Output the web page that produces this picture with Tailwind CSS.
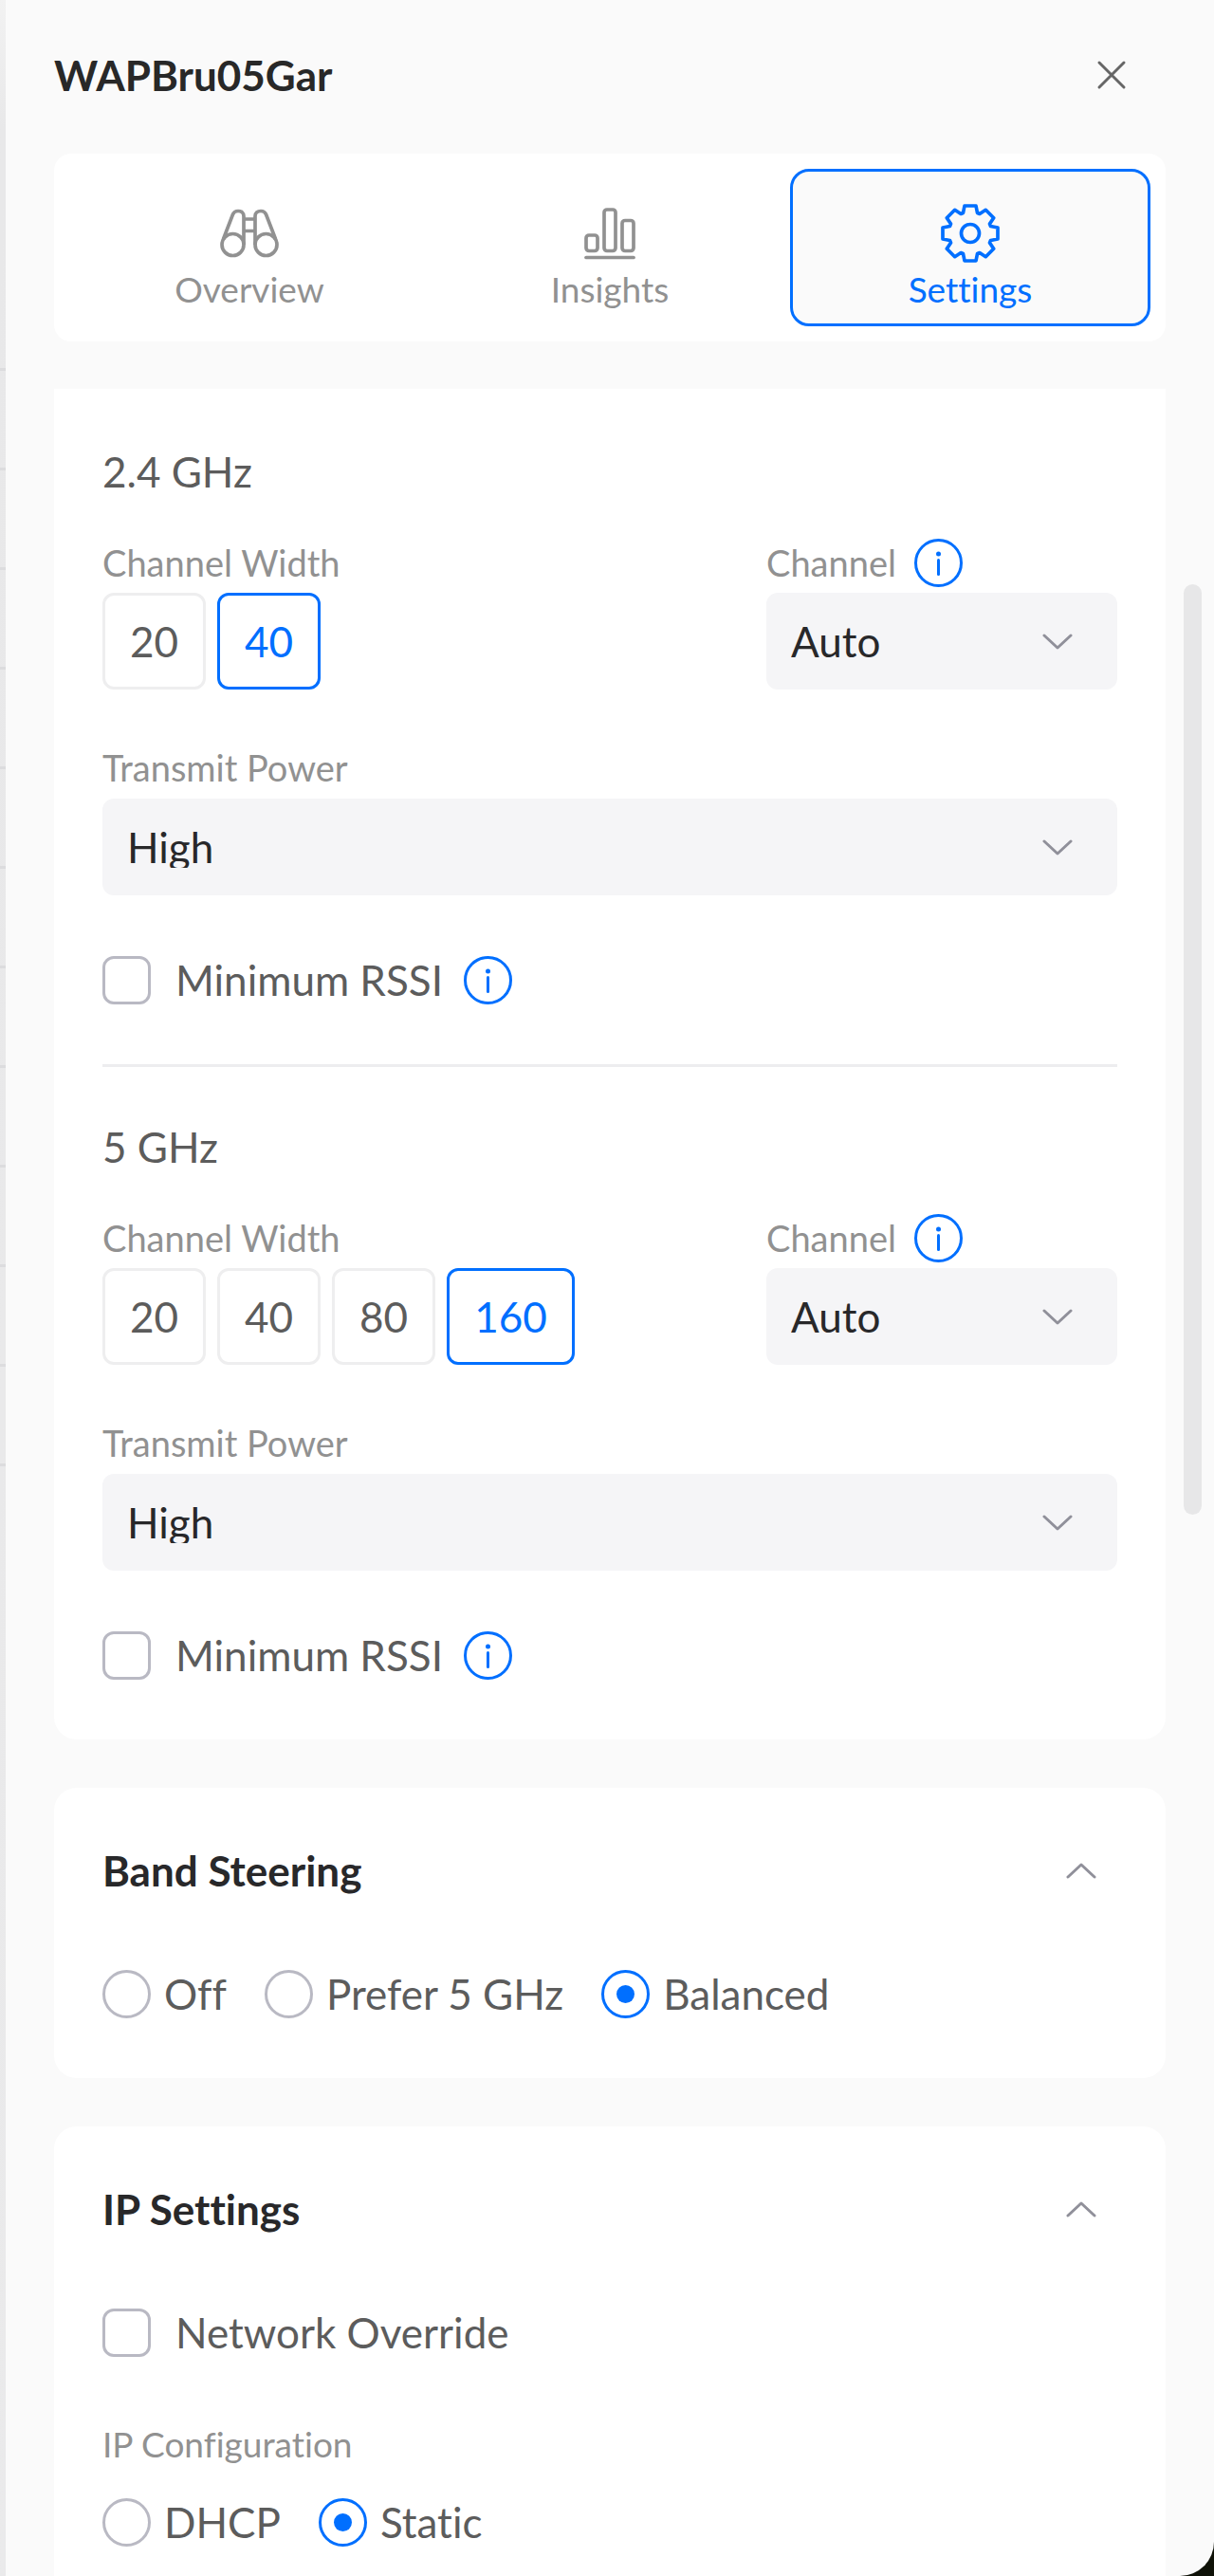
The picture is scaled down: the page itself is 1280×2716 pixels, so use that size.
<!DOCTYPE html>
<html lang="en">
<head>
    <meta charset="UTF-8">
    <meta name="viewport" content="width=device-width, initial-scale=1.0">
    <title>WAPBru05Gar - Settings</title>
    <script src="https://cdn.jsdelivr.net/npm/@tailwindcss/browser@4"></script>
</head>

<body class="bg-[#0f1208] font-['Lato',sans-serif] text-[44px] leading-[51px] text-[#5c5c5c] [font-variant-ligatures:none]">
    <!-- Shared icons -->
    <svg class="hidden" aria-hidden="true">
        <symbol id="icon-info" viewBox="0 0 51 51">
            <circle cx="25.5" cy="25.5" r="24" fill="none" stroke="currentColor" stroke-width="3" />
            <circle cx="25.5" cy="16" r="2.5" fill="currentColor" />
            <path d="M25.5 22.5v15" stroke="currentColor" stroke-width="3" stroke-linecap="round" />
        </symbol>
        <symbol id="icon-chevron" viewBox="0 0 32 18">
            <path d="M2 2l14 13L30 2" fill="none" stroke="currentColor" stroke-width="3" stroke-linecap="round" stroke-linejoin="round" />
        </symbol>
    </svg>

    <div class="flex h-screen overflow-hidden rounded-br-[36px] bg-[#fafafa]">
        <!-- Edge of the device table behind the panel -->
        <div class="flex w-[6px] shrink-0 flex-col bg-linear-to-b from-[#f2f2f2] via-[#e8e8e9] via-5% to-[#eaeaeb] pt-[388px]">
            <div class="h-[105px] border-t-3 border-[#dcdcde]"></div>
            <div class="h-[105px] border-t-3 border-[#dcdcde]"></div>
            <div class="h-[105px] border-t-3 border-[#dcdcde]"></div>
            <div class="h-[105px] border-t-3 border-[#dcdcde]"></div>
            <div class="h-[105px] border-t-3 border-[#dcdcde]"></div>
            <div class="h-[105px] border-t-3 border-[#dcdcde]"></div>
            <div class="h-[105px] border-t-3 border-[#dcdcde]"></div>
            <div class="h-[105px] border-t-3 border-[#dcdcde]"></div>
            <div class="h-[105px] border-t-3 border-[#dcdcde]"></div>
            <div class="h-[105px] border-t-3 border-[#dcdcde]"></div>
            <div class="h-[105px] border-t-3 border-[#dcdcde]"></div>
            <div class="h-[105px] border-t-3 border-[#dcdcde]"></div>
        </div>

        <main class="relative flex min-w-0 flex-1 flex-col px-[51px]">
            <!-- Panel header -->
            <header class="flex items-center justify-between pt-[47px] pr-[41px] pb-[51px]">
                <h1 class="font-bold leading-[64px] text-[#282828]">WAPBru05Gar</h1>
                <button type="button" aria-label="Close" class="text-[#666]">
                    <svg class="size-8" viewBox="0 0 32 32" fill="none" stroke="currentColor" stroke-width="3" stroke-linecap="round">
                        <path d="M3 3l26 26M29 3L3 29" />
                    </svg>
                </button>
            </header>

            <!-- Tabs -->
            <nav class="grid shrink-0 grid-cols-3 rounded-[18px] bg-white p-4 text-[37px] leading-[46px] text-[#919191]">
                <button type="button" class="flex h-[166px] flex-col items-center gap-1 rounded-[20px] border-3 border-transparent pt-[33px]">
                    <svg class="size-16 shrink-0" viewBox="0 0 64 64" fill="none" stroke="currentColor" stroke-width="3.7">
                        <circle cx="14.5" cy="44" r="11.5" />
                        <circle cx="49.5" cy="44" r="11.5" />
                        <path d="M4.5 38L14.5 12C15.8 8.8 18 8.5 20 8.5C23.5 8.5 26 10.5 26 14V44" />
                        <path d="M59.5 38L49.5 12C48.2 8.8 46 8.5 44 8.5C40.5 8.5 38 10.5 38 14V44" />
                        <path d="M26 17h12M26 29.5h12" />
                    </svg>
                    Overview
                </button>
                <button type="button" class="flex h-[166px] flex-col items-center gap-1 rounded-[20px] border-3 border-transparent pt-[33px]">
                    <svg class="size-16 shrink-0" viewBox="0 0 64 64" fill="none" stroke="currentColor" stroke-width="3.7">
                        <rect x="7" y="34" width="12" height="16.5" rx="3" />
                        <rect x="26" y="7" width="12" height="43.5" rx="3" />
                        <rect x="45" y="18.5" width="12" height="32" rx="3" />
                        <path d="M7 57.5h50" stroke-linecap="round" />
                    </svg>
                    Insights
                </button>
                <button type="button" aria-current="page" class="flex h-[166px] flex-col items-center gap-1 rounded-[20px] border-3 border-[#006fff] bg-[#fafafa] pt-[33px] text-[#006fff]">
                    <svg class="size-16 shrink-0" viewBox="-32 -32 64 64" fill="none" stroke="currentColor" stroke-width="3.7" stroke-linejoin="round">
                        <path d="M-7.5 -21.5L-6 -29H6L7.5 -21.5L9.9 -20.5L16.3 -24.7L24.7 -16.3L20.5 -9.9L21.5 -7.5L29 -6V6L21.5 7.5L20.5 9.9L24.7 16.3L16.3 24.7L9.9 20.5L7.5 21.5L6 29H-6L-7.5 21.5L-9.9 20.5L-16.3 24.7L-24.7 16.3L-20.5 9.9L-21.5 7.5L-29 6V-6L-21.5 -7.5L-20.5 -9.9L-24.7 -16.3L-16.3 -24.7L-9.9 -20.5Z" />
                        <circle r="9.5" />
                    </svg>
                    Settings
                </button>
            </nav>

            <!-- Scrolling settings -->
            <div class="mt-[50px] flex min-h-0 flex-1 flex-col gap-[51px] overflow-hidden">
                <!-- Radios -->
                <section class="shrink-0 rounded-b-[24px] bg-white px-[51px] pt-[55px] pb-[63px]">
                    <div>
                        <h2 class="mb-[39px] leading-[64px]">2.4 GHz</h2>
                        <div class="flex items-start justify-between">
                            <div>
                                <p class="mb-[6px] text-[38px] text-[#919191]">Channel Width</p>
                                <div class="flex gap-3">
                                    <button type="button" class="h-[102px] rounded-[12px] border-3 border-[#eeeeef] px-[26px]">20</button>
                                    <button type="button" aria-pressed="true" class="h-[102px] rounded-[12px] border-3 border-[#006fff] px-[26px] text-[#006fff]">40</button>
                                </div>
                            </div>
                            <div class="w-[370px]">
                                <div class="mb-[6px] flex gap-[19px]">
                                    <label for="channel-24" class="text-[38px] text-[#919191]">Channel</label>
                                    <svg class="size-[51px] text-[#006fff]"><use href="#icon-info" /></svg>
                                </div>
                                <div class="relative">
                                    <select id="channel-24" class="block h-[102px] w-full appearance-none rounded-[12px] bg-[#f5f5f7] px-[26px] pt-[26px] pb-[29px] leading-[51px] text-[#28282a]">
                                        <option>Auto</option>
                                    </select>
                                    <svg class="pointer-events-none absolute top-[43px] right-[47px] h-[18px] w-8 text-[#90909a]"><use href="#icon-chevron" /></svg>
                                </div>
                            </div>
                        </div>
                        <label for="power-24" class="mt-[57px] mb-[7px] block text-[38px] text-[#919191]">Transmit Power</label>
                        <div class="relative">
                            <select id="power-24" class="block h-[102px] w-full appearance-none rounded-[12px] bg-[#f5f5f7] px-[26px] pt-[26px] pb-[29px] leading-[51px] text-[#28282a]">
                                <option>High</option>
                            </select>
                            <svg class="pointer-events-none absolute top-[43px] right-[47px] h-[18px] w-8 text-[#90909a]"><use href="#icon-chevron" /></svg>
                        </div>
                        <div class="mt-[64px] flex items-center gap-[22px]">
                            <label class="flex items-center gap-[26px]">
                                <input type="checkbox" class="size-[51px] appearance-none rounded-[12px] border-3 border-[#b9b9c3]">
                                Minimum RSSI
                            </label>
                            <svg class="size-[51px] text-[#006fff]"><use href="#icon-info" /></svg>
                        </div>
                    </div>

                    <hr class="mt-[63px] mb-[52px] border-t-3 border-[#ededef]">

                    <div>
                        <h2 class="mb-[39px] leading-[64px]">5 GHz</h2>
                        <div class="flex items-start justify-between">
                            <div>
                                <p class="mb-[6px] text-[38px] text-[#919191]">Channel Width</p>
                                <div class="flex gap-3">
                                    <button type="button" class="h-[102px] rounded-[12px] border-3 border-[#eeeeef] px-[26px]">20</button>
                                    <button type="button" class="h-[102px] rounded-[12px] border-3 border-[#eeeeef] px-[26px]">40</button>
                                    <button type="button" class="h-[102px] rounded-[12px] border-3 border-[#eeeeef] px-[26px]">80</button>
                                    <button type="button" aria-pressed="true" class="h-[102px] rounded-[12px] border-3 border-[#006fff] px-[26px] text-[#006fff]">160</button>
                                </div>
                            </div>
                            <div class="w-[370px]">
                                <div class="mb-[6px] flex gap-[19px]">
                                    <label for="channel-5" class="text-[38px] text-[#919191]">Channel</label>
                                    <svg class="size-[51px] text-[#006fff]"><use href="#icon-info" /></svg>
                                </div>
                                <div class="relative">
                                    <select id="channel-5" class="block h-[102px] w-full appearance-none rounded-[12px] bg-[#f5f5f7] px-[26px] pt-[26px] pb-[29px] leading-[51px] text-[#28282a]">
                                        <option>Auto</option>
                                    </select>
                                    <svg class="pointer-events-none absolute top-[43px] right-[47px] h-[18px] w-8 text-[#90909a]"><use href="#icon-chevron" /></svg>
                                </div>
                            </div>
                        </div>
                        <label for="power-5" class="mt-[57px] mb-[7px] block text-[38px] text-[#919191]">Transmit Power</label>
                        <div class="relative">
                            <select id="power-5" class="block h-[102px] w-full appearance-none rounded-[12px] bg-[#f5f5f7] px-[26px] pt-[26px] pb-[29px] leading-[51px] text-[#28282a]">
                                <option>High</option>
                            </select>
                            <svg class="pointer-events-none absolute top-[43px] right-[47px] h-[18px] w-8 text-[#90909a]"><use href="#icon-chevron" /></svg>
                        </div>
                        <div class="mt-[64px] flex items-center gap-[22px]">
                            <label class="flex items-center gap-[26px]">
                                <input type="checkbox" class="size-[51px] appearance-none rounded-[12px] border-3 border-[#b9b9c3]">
                                Minimum RSSI
                            </label>
                            <svg class="size-[51px] text-[#006fff]"><use href="#icon-info" /></svg>
                        </div>
                    </div>
                </section>

                <!-- Band Steering -->
                <section class="shrink-0 rounded-[24px] bg-white px-[51px] pt-[55px] pb-[63px]">
                    <div class="mb-[73px] flex items-center justify-between pr-[22px]">
                        <h2 class="font-bold leading-[64px] text-[#28282a]">Band Steering</h2>
                        <button type="button" aria-label="Collapse Band Steering" class="text-[#90909a]">
                            <svg class="h-[18px] w-8 rotate-180"><use href="#icon-chevron" /></svg>
                        </button>
                    </div>
                    <div class="flex gap-10">
                        <label class="flex items-center gap-[14px]">
                            <input type="radio" name="steering" class="grid size-[51px] appearance-none place-content-center rounded-full border-3 border-[#b9b9c3] before:size-[19px] before:rounded-full checked:border-[#006fff] checked:before:bg-[#006fff]">
                            Off
                        </label>
                        <label class="flex items-center gap-[14px]">
                            <input type="radio" name="steering" class="grid size-[51px] appearance-none place-content-center rounded-full border-3 border-[#b9b9c3] before:size-[19px] before:rounded-full checked:border-[#006fff] checked:before:bg-[#006fff]">
                            Prefer 5 GHz
                        </label>
                        <label class="flex items-center gap-[14px]">
                            <input type="radio" name="steering" checked class="grid size-[51px] appearance-none place-content-center rounded-full border-3 border-[#b9b9c3] before:size-[19px] before:rounded-full checked:border-[#006fff] checked:before:bg-[#006fff]">
                            Balanced
                        </label>
                    </div>
                </section>

                <!-- IP Settings -->
                <section class="shrink-0 rounded-[24px] bg-white px-[51px] pt-[55px] pb-[63px]">
                    <div class="mb-[73px] flex items-center justify-between pr-[22px]">
                        <h2 class="font-bold leading-[64px] text-[#28282a]">IP Settings</h2>
                        <button type="button" aria-label="Collapse IP Settings" class="text-[#90909a]">
                            <svg class="h-[18px] w-8 rotate-180"><use href="#icon-chevron" /></svg>
                        </button>
                    </div>
                    <label class="flex items-center gap-[26px]">
                        <input type="checkbox" class="size-[51px] appearance-none rounded-[12px] border-3 border-[#b9b9c3]">
                        Network Override
                    </label>
                    <p class="mt-[66px] mb-[32px] text-[37px] text-[#919191]">IP Configuration</p>
                    <div class="flex gap-10">
                        <label class="flex items-center gap-[14px]">
                            <input type="radio" name="ip-config" class="grid size-[51px] appearance-none place-content-center rounded-full border-3 border-[#b9b9c3] before:size-[19px] before:rounded-full checked:border-[#006fff] checked:before:bg-[#006fff]">
                            DHCP
                        </label>
                        <label class="flex items-center gap-[14px]">
                            <input type="radio" name="ip-config" checked class="grid size-[51px] appearance-none place-content-center rounded-full border-3 border-[#b9b9c3] before:size-[19px] before:rounded-full checked:border-[#006fff] checked:before:bg-[#006fff]">
                            Static
                        </label>
                    </div>
                </section>
            </div>

            <!-- Scrollbar thumb -->
            <div class="absolute top-[616px] right-[13px] h-[981px] w-[19px] rounded-full bg-[#e7e7e8]"></div>
        </main>
    </div>
</body>
</html>
